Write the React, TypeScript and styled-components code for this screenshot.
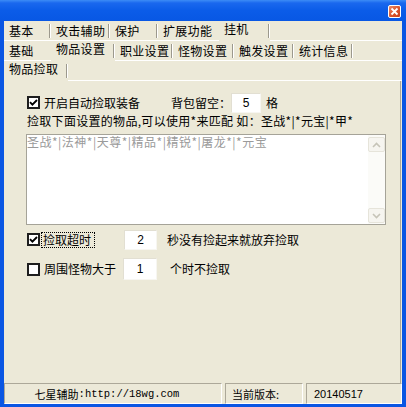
import React from 'react';
import styled, { createGlobalStyle } from 'styled-components';

const GlobalStyle = createGlobalStyle`
  html, body {
    margin: 0;
    padding: 0;
    background: #fff;
  }
  body {
    font-family: "Noto Sans CJK SC", "Liberation Sans", sans-serif;
    font-size: 12px;
    color: #000;
  }
`;

interface TabDef {
  label: string;
  width: number;
  selected?: boolean;
}

const topTabs: TabDef[] = [
  { label: '基本', width: 47 },
  { label: '攻击辅助', width: 59 },
  { label: '保护', width: 48 },
  { label: '扩展功能', width: 61 },
  { label: '挂机', width: 51, selected: true },
];

const subTabs: TabDef[] = [
  { label: '基础', width: 47 },
  { label: '物品设置', width: 64, selected: true },
  { label: '职业设置', width: 58 },
  { label: '怪物设置', width: 61 },
  { label: '触发设置', width: 60 },
  { label: '统计信息', width: 59 },
];

const pageTabs: TabDef[] = [{ label: '物品捡取', width: 64, selected: true }];

function TabRow({ tabs }: { tabs: TabDef[] }) {
  return (
    <TabStrip>
      {tabs.map((t, i) => {
        const nextSelected = tabs[i + 1]?.selected;
        return (
          <Tab key={t.label} $width={t.width} $selected={!!t.selected} $sep={!nextSelected}>
            <TabLabel $selected={!!t.selected}>{t.label}</TabLabel>
          </Tab>
        );
      })}
    </TabStrip>
  );
}

function Checkbox({ checked }: { checked?: boolean }) {
  return (
    <CheckBoxBox>
      {checked && (
        <svg width="9" height="9" viewBox="0 0 9 9">
          <path d="M1 4.2 L3.4 6.6 L8 2" fill="none" stroke="#000" strokeWidth="1.9" />
        </svg>
      )}
    </CheckBoxBox>
  );
}

function Chevron({ up }: { up?: boolean }) {
  return (
    <svg width="9" height="6" viewBox="0 0 9 6">
      <path
        d={up ? 'M1 5 L4.5 1.5 L8 5' : 'M1 1 L4.5 4.5 L8 1'}
        fill="none"
        stroke="#C6C4B8"
        strokeWidth="1.6"
      />
    </svg>
  );
}

export default function App() {
  return (
    <>
      <GlobalStyle />
      <Window>
        <TitleBar>
          <CloseButton>
            <svg width="9" height="9" viewBox="0 0 9 9">
              <path d="M1.5 1.5 L7.5 7.5 M7.5 1.5 L1.5 7.5" stroke="#fff" strokeWidth="1.8" />
            </svg>
          </CloseButton>
        </TitleBar>
        <Frame>
          <TabRow tabs={topTabs} />
          <TabRow tabs={subTabs} />
          <TabRow tabs={pageTabs} />
          <Content>
            <OptionRow $top={0} $height={21}>
              <CheckCell $width={144}>
                <Checkbox checked />
                <Label>开启自动捡取装备</Label>
              </CheckCell>
              <Label>背包留空：</Label>
              <NumberBox $width={30} $height={20}>5</NumberBox>
              <Label $gap={5}>格</Label>
            </OptionRow>
            <Hint>捡取下面设置的物品,可以使用*来匹配 如：圣战*|*元宝|*甲*</Hint>
            <ListBox>
              <ListText>圣战*|法神*|天尊*|精品*|精锐*|屠龙*|*元宝</ListText>
              <ScrollBar>
                <ScrollButton>
                  <Chevron up />
                </ScrollButton>
                <ScrollTrack />
                <ScrollButton>
                  <Chevron />
                </ScrollButton>
              </ScrollBar>
            </ListBox>
            <OptionRow $top={4} $height={21}>
              <CheckCell $width={97}>
                <Checkbox checked />
                <FocusLabel>捡取超时</FocusLabel>
              </CheckCell>
              <NumberBox $width={33} $height={20}>2</NumberBox>
              <Label $gap={10}>秒没有捡起来就放弃捡取</Label>
            </OptionRow>
            <OptionRow $top={8} $height={22}>
              <CheckCell $width={96}>
                <Checkbox />
                <Label>周围怪物大于</Label>
              </CheckCell>
              <NumberBox $width={34} $height={22}>1</NumberBox>
              <Label $gap={13}>个时不捡取</Label>
            </OptionRow>
          </Content>
          <StatusBar>
            <StatusPanel $width={218} $align="center">
              七星辅助<Mono>:http://18wg.com</Mono>
            </StatusPanel>
            <StatusPanel $width={78} $align="left">
              当前版本:
            </StatusPanel>
            <StatusPanel $width={0} $align="left">
              <Digits>20140517</Digits>
            </StatusPanel>
          </StatusBar>
        </Frame>
      </Window>
    </>
  );
}

const Window = styled.div`
  width: 406px;
  height: 407px;
  display: flex;
  flex-direction: column;
  background: #0A56E3;
`;

const TitleBar = styled.div`
  flex: none;
  height: 21px;
  box-sizing: border-box;
  padding: 5px 5px 0 0;
  display: flex;
  justify-content: flex-end;
  align-items: flex-start;
  background: linear-gradient(to bottom, #3C8CF6 0, #1A68EE 3px, #0B5CE8 50%, #0857E4 100%);
`;

const CloseButton = styled.div`
  width: 13px;
  height: 13px;
  box-sizing: border-box;
  border: 1px solid #fff;
  border-radius: 2px;
  background: linear-gradient(135deg, #EC8A66 0%, #D9542C 55%, #C7401A 100%);
  display: flex;
  align-items: center;
  justify-content: center;
`;

const Frame = styled.div`
  flex: 1;
  min-height: 0;
  margin: 0 4px 3px 4px;
  background: #ECE9D8;
  display: flex;
  flex-direction: column;
`;

const TabStrip = styled.div`
  flex: none;
  display: flex;
  align-items: flex-start;
  border-bottom: 1px solid #fff;
`;

const Tab = styled.div<{ $width: number; $selected: boolean; $sep: boolean }>`
  flex: none;
  width: ${(p) => p.$width}px;
  height: ${(p) => (p.$selected ? 20 : 19)}px;
  margin-bottom: ${(p) => (p.$selected ? -1 : 0)}px;
  box-sizing: border-box;
  padding-left: 5px;
  display: flex;
  align-items: center;
  background-color: #ECE9D8;
  background-image: ${(p) =>
    p.$sep ? 'linear-gradient(to right, #9C998D 0, #9C998D 1px, #fff 1px, #fff 2px)' : 'none'};
  background-repeat: no-repeat;
  background-position: right 0 top 3px;
  background-size: 2px 14px;
  white-space: nowrap;
`;

const TabLabel = styled.span<{ $selected: boolean }>`
  display: inline-block;
  line-height: 14px;
  letter-spacing: 0.3px;
  padding-bottom: ${(p) => (p.$selected ? 5 : 0)}px;
`;

const Content = styled.div`
  flex: 1;
  min-height: 0;
  margin-right: 1px;
  border-right: 1px solid #ACA899;
  padding: 11px 0 0 23px;
  display: flex;
  flex-direction: column;
  align-items: flex-start;
`;

const OptionRow = styled.div<{ $top: number; $height: number }>`
  display: flex;
  align-items: center;
  height: ${(p) => p.$height}px;
  margin-top: ${(p) => p.$top}px;
`;

const CheckCell = styled.div<{ $width: number }>`
  flex: none;
  width: ${(p) => p.$width}px;
  display: flex;
  align-items: center;
  gap: 4px;
`;

const CheckBoxBox = styled.div`
  flex: none;
  width: 13px;
  height: 13px;
  box-sizing: border-box;
  border: 2px solid #1E1E1E;
  background: #fff;
  display: flex;
  align-items: center;
  justify-content: center;
`;

const Label = styled.span<{ $gap?: number }>`
  white-space: nowrap;
  line-height: 16px;
  margin-left: ${(p) => p.$gap ?? 0}px;
`;

const FocusLabel = styled.span`
  white-space: nowrap;
  line-height: 14px;
  padding: 0 3px 0 1px;
  margin-left: -2px;
  outline: 1px dotted #000;
`;

const NumberBox = styled.div<{ $width: number; $height: number }>`
  flex: none;
  width: ${(p) => p.$width}px;
  height: ${(p) => p.$height}px;
  box-sizing: border-box;
  background: #fff;
  border: 1px solid;
  border-color: #E2DFD2 #F7F6F1 #F7F6F1 #E2DFD2;
  font-family: "Liberation Sans", sans-serif;
  font-size: 12px;
  display: flex;
  align-items: center;
  justify-content: center;
`;

const Hint = styled.div`
  line-height: 16px;
  letter-spacing: 0.3px;
  white-space: nowrap;
`;

const ListBox = styled.div`
  margin: 5px 0 0 -1px;
  width: 360px;
  height: 91px;
  box-sizing: border-box;
  border: 1px solid #A5A398;
  background: #fff;
  display: flex;
`;

const ListText = styled.div`
  flex: 1;
  color: #9A9A9A;
  line-height: 14px;
  letter-spacing: 0.5px;
  white-space: nowrap;
`;

const ScrollBar = styled.div`
  flex: none;
  width: 17px;
  padding: 2px 0 1px;
  display: flex;
  flex-direction: column;
  background: #FBFBF8;
`;

const ScrollButton = styled.div`
  flex: none;
  height: 15px;
  box-sizing: border-box;
  border: 1px solid #E6E4DA;
  border-radius: 2px;
  background: #F6F5F0;
  display: flex;
  align-items: center;
  justify-content: center;
`;

const ScrollTrack = styled.div`
  flex: 1;
`;

const StatusBar = styled.div`
  flex: none;
  height: 21px;
  display: flex;
  gap: 3px;
`;

const StatusPanel = styled.div<{ $width: number; $align: 'left' | 'center' }>`
  ${(p) => (p.$width ? `width: ${p.$width}px; flex: none;` : 'flex: 1;')}
  box-sizing: border-box;
  border: 1px solid;
  border-color: #ACA899 #fff #fff #ACA899;
  display: flex;
  align-items: center;
  justify-content: ${(p) => (p.$align === 'center' ? 'center' : 'flex-start')};
  padding-left: ${(p) => (p.$align === 'center' ? 0 : 6)}px;
  padding-right: ${(p) => (p.$align === 'center' ? 12 : 0)}px;
  font-size: 11px;
  white-space: nowrap;
`;

const Mono = styled.span`
  font-family: "Liberation Mono", monospace;
  font-size: 10.5px;
`;

const Digits = styled.span`
  font-family: "Liberation Sans", sans-serif;
  font-size: 11px;
  padding-left: 1px;
`;
